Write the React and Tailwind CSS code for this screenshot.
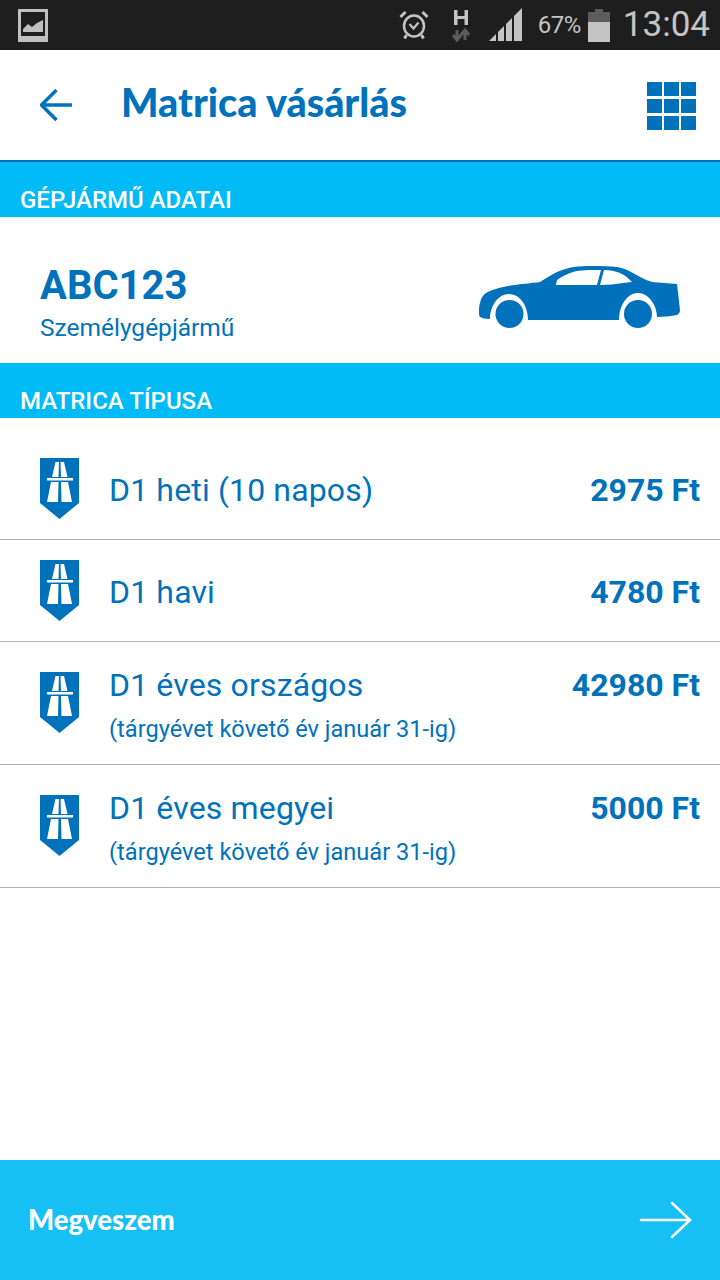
// ── Drawings ──────────────────────────────────────────────────────────────────

function PictureIcon() {
  return (
    <svg width="30" height="33" viewBox="0 0 30 33" className="block">
      <rect x="1.500" y="1.500" width="27" height="30" fill="none" stroke="#c0c0c0" strokeWidth="3" />
      <rect x="0" y="27" width="30" height="6" fill="#c0c0c0" />
      <path d="M5 23V20L10 15L14 18L19 14L25 11V23Z" fill="#c0c0c0" />
    </svg>
  )
}

function AlarmIcon() {
  return (
    <svg width="30" height="30" viewBox="0 0 30 30" className="block" fill="none" stroke="#c4c4c4">
      <ellipse cx="15" cy="16" rx="10" ry="10.500" strokeWidth="2.500" />
      <path d="M10.500 14L14.500 18.500L19.500 12.500" strokeWidth="2.200" />
      <path d="M1.500 7L6.500 2M28.500 7L23.500 2" strokeWidth="3" />
      <path d="M7.500 25L5.500 28.500M22.500 25L24.500 28.500" strokeWidth="3" />
    </svg>
  )
}

function DataIcon() {
  return (
    <svg width="20" height="36" viewBox="0 0 20 36" className="block">
      <path d="M3 3H6.500V9H13.500V3H17V18H13.500V12H6.500V18H3Z" fill="#c4c4c4" />
      <path d="M6 23V32M2 28L6 33L10 28" fill="none" stroke="#5c5c5c" strokeWidth="3" />
      <path d="M14 33V24M10 28L14 23L18 28" fill="none" stroke="#5c5c5c" strokeWidth="3" />
    </svg>
  )
}

function SignalIcon() {
  return (
    <svg width="34" height="34" viewBox="0 0 34 34" className="block">
      <path d="M0 33L7 26V33Z" fill="#c4c4c4" />
      <path d="M9 24L15 18V33H9Z" fill="#c4c4c4" />
      <path d="M17 16L23 10V33H17Z" fill="#c4c4c4" />
      <path d="M25 8L33 0V33H25Z" fill="#c4c4c4" />
    </svg>
  )
}

function BatteryIcon() {
  return (
    <svg width="22" height="33" viewBox="0 0 22 33" className="block">
      <rect x="7" y="0" width="8" height="3" fill="#5c5c5c" />
      <rect x="0" y="3" width="22" height="10" fill="#5c5c5c" />
      <rect x="0" y="13" width="22" height="20" fill="#c4c4c4" />
    </svg>
  )
}

function BackArrow() {
  return (
    <svg width="32" height="34" viewBox="0 0 32 34" className="block shrink-0" fill="none" stroke="#0072bc" strokeWidth="3.500">
      <path d="M2 17H32" />
      <path d="M16.500 2L1.500 17L16.500 32" />
    </svg>
  )
}

function GridIcon() {
  return (
    <div className="grid grid-cols-[15px_15px_15px] grid-rows-[14px_14px_14px] gap-x-[2px] gap-y-[3px]">
      {Array.from({ length: 9 }).map((_, i) => (
        <div key={i} className="bg-[#0072bc]" />
      ))}
    </div>
  )
}

function CarIcon() {
  return (
    <svg width="240" height="70" viewBox="0 5 240 70" className="block overflow-visible">
      <path
        d="M19 62C19 58 19 56 20 53C21 48 23 45 26 43C31 40 38 38 48 36C60 34 72 33 80 32C86 28 91 25 97 22C102 20 107 18 113 17C120 16 126 16 133 16C142 16 150 16 157 17C163 18 168 20 173 23C179 26 185 30 192 32C199 33 209 33 217 34C218 42 219 52 220 60C220 62 219 64 217 65C211 66 204 67 197 67C197 56 189 43 178 43C167 43 159 56 159 70H68C68 56 60 44 49 44C38 44 30 56 30 69C25 69 22 68 20 67C19 66 19 64 19 62Z"
        fill="#0072bc"
      />
      <path d="M97 30L96 35H137L141 20C130 20 120 20 113 22C107 24 103 26 97 30Z" fill="#ffffff" />
      <path d="M144 20L140 35C148 35 156 34 163 33L172 32C168 28 165 25 160 23C155 21 150 20 144 20Z" fill="#ffffff" />
      <circle cx="49.500" cy="64" r="14" fill="#0072bc" />
      <circle cx="178" cy="64" r="14" fill="#0072bc" />
    </svg>
  )
}

function MotorwayIcon() {
  return (
    <svg width="39" height="61" viewBox="0 0 39 61" className="block shrink-0">
      <path d="M0 0H39V45L19.500 61L0 45Z" fill="#0072bc" />
      <path d="M15.500 4H19L18.500 19H12Z" fill="#ffffff" />
      <path d="M20.500 4H24L27.500 19H21Z" fill="#ffffff" />
      <rect x="7" y="20" width="26" height="2.500" fill="#ffffff" />
      <path d="M11 24H18.500L18 44H7Z" fill="#ffffff" />
      <path d="M21 24H28L32 44H21.500Z" fill="#ffffff" />
    </svg>
  )
}

function FooterArrow() {
  return (
    <svg width="54" height="38" viewBox="0 0 54 38" className="block" fill="none" stroke="#ffffff" strokeWidth="2.500" strokeLinecap="round">
      <path d="M2 19H51" />
      <path d="M33 2L51 19L33 36" />
    </svg>
  )
}

// ── Data ──────────────────────────────────────────────────────────────────────

const SUBTITLE = '(tárgyévet követő év január 31-ig)'

const ROWS = [
  { name: 'D1 heti (10 napos)', price: '2975 Ft', cls: 'h-[122px] pt-[20px]' },
  { name: 'D1 havi', price: '4780 Ft', cls: 'h-[102px]' },
  { name: 'D1 éves országos', price: '42980 Ft', sub: SUBTITLE, cls: 'h-[123px]' },
  { name: 'D1 éves megyei', price: '5000 Ft', sub: SUBTITLE, cls: 'h-[123px]' },
]

// ── Sub-components ────────────────────────────────────────────────────────────

function SectionTitle({ children }) {
  return (
    <div className="flex h-[55px] items-end bg-[#00bbf5] pl-5 text-[24px] leading-[34px] font-medium text-white">
      {children}
    </div>
  )
}

function Row({ name, price, sub, cls }) {
  return (
    <div className={`flex items-center border-b border-[#a9b4b9] pl-10 pr-5 ${cls}`}>
      <div className={sub ? '-translate-y-px' : ''}><MotorwayIcon /></div>
      <div className={`ml-[30px] flex-1 ${sub ? '' : 'translate-y-px'}`}>
        <div className="text-[32px] leading-[38px] tracking-[0.15px] text-[#0072bc]">{name}</div>
        {sub && <div className="mt-[10px] -mb-[3px] text-[23.600px] leading-[30px] text-[#0072bc]">{sub}</div>}
      </div>
      <div className={`text-[32px] leading-[38px] font-bold text-[#0072bc] ${sub ? 'self-start mt-[24px]' : 'translate-y-px'}`}>{price}</div>
    </div>
  )
}

// ── Main component ────────────────────────────────────────────────────────────

export default function App() {
  return (
    <div className="flex h-[1280px] w-[720px] flex-col overflow-hidden bg-white font-['Roboto',sans-serif]">
      <div className="flex h-[50px] items-center bg-[#1e1e1e] pl-[18px] pr-[10px]">
        <PictureIcon />
        <div className="ml-auto flex items-center">
          <AlarmIcon />
          <div className="ml-[22px]"><DataIcon /></div>
          <div className="ml-[18px]"><SignalIcon /></div>
          <span className="ml-[15px] text-[24px] tracking-[-0.5px] text-[#c4c4c4]">67%</span>
          <div className="ml-[7px]"><BatteryIcon /></div>
          <span className="ml-[13px] text-[35px] leading-[50px] text-[#c4c4c4]">13:04</span>
        </div>
      </div>

      <header className="flex h-[112px] items-center border-b-2 border-[#0072bc] pl-10 pr-[24px]">
        <BackArrow />
        <h1 className="ml-[49px] -translate-y-[3px] font-['Lato',sans-serif] text-[39.500px] leading-[44px] font-black text-[#0072bc]">
          Matrica vásárlás
        </h1>
        <div className="ml-auto translate-y-px"><GridIcon /></div>
      </header>

      <SectionTitle>GÉPJÁRMŰ ADATAI</SectionTitle>

      <div className="flex h-[146px] items-center pl-10 pr-5">
        <div className="pt-[24px]">
          <div className="text-[40px] leading-[46px] font-bold text-[#0072bc]">ABC123</div>
          <div className="mt-[5px] text-[24.500px] leading-[28px] text-[#0072bc]">Személygépjármű</div>
        </div>
        <div className="ml-auto"><CarIcon /></div>
      </div>

      <SectionTitle>MATRICA TÍPUSA</SectionTitle>

      <div className="flex-1">
        {ROWS.map((row) => <Row key={row.name} {...row} />)}
      </div>

      <div className="flex h-[120px] items-center justify-between bg-[#16c0f5] pl-7 pr-[27px]">
        <span className="font-['Lato',sans-serif] text-[27.500px] font-black text-white">Megveszem</span>
        <FooterArrow />
      </div>
    </div>
  )
}
